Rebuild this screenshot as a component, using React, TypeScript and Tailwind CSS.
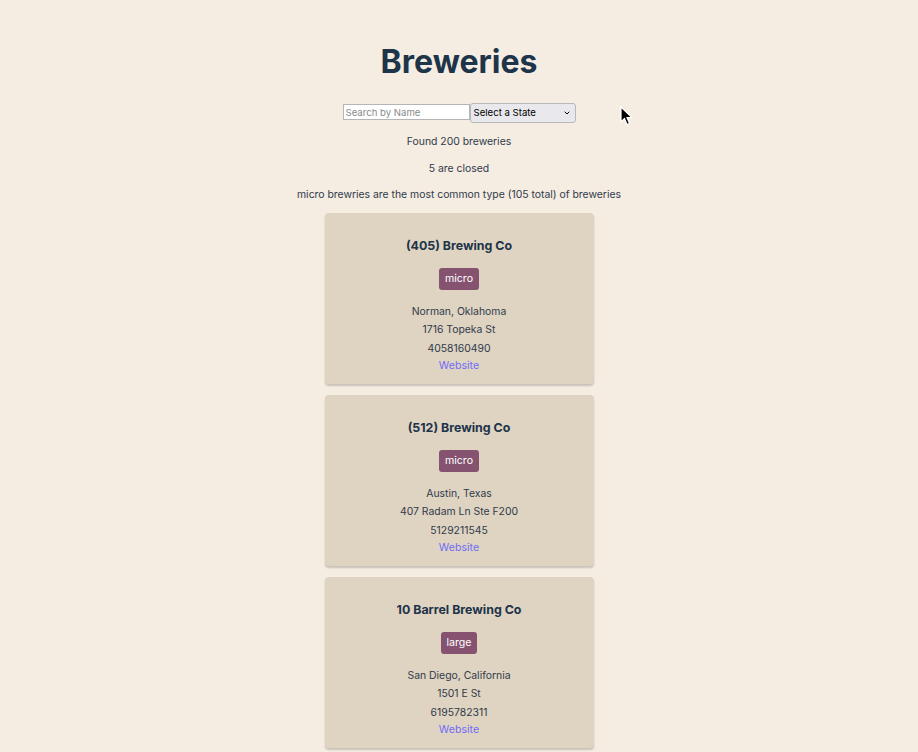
import { ChevronDown } from "lucide-react";

type Brewery = {
  name: string;
  type: string;
  city: string;
  state: string;
  street: string;
  phone: string;
};

const breweries: Brewery[] = [
  { name: "(405) Brewing Co", type: "micro", city: "Norman", state: "Oklahoma", street: "1716 Topeka St", phone: "4058160490" },
  { name: "(512) Brewing Co", type: "micro", city: "Austin", state: "Texas", street: "407 Radam Ln Ste F200", phone: "5129211545" },
  { name: "10 Barrel Brewing Co", type: "large", city: "San Diego", state: "California", street: "1501 E St", phone: "6195782311" },
];

const BreweryCard = ({ b }: { b: Brewery }) => (
  <div className="flex h-[171px] w-[269px] flex-col items-center rounded-[4px] bg-[#dfd3c2] pt-[24px] text-center shadow-[0_2px_2px_rgba(0,0,0,0.18)]">
    <h3 className="text-[12.4px] font-bold leading-[18px] text-[#1d3449]">{b.name}</h3>
    <span className="mt-[13px] flex h-[22px] items-center rounded-[3px] bg-[#85536f] px-[5.5px] text-[10.6px] text-white">
      {b.type}
    </span>
    <div className="mt-[13px] text-[10.4px] leading-[18.5px] text-[#2f3b4a]">
      <p>
        {b.city}, {b.state}
      </p>
      <p>{b.street}</p>
      <p>{b.phone}</p>
    </div>
    <a href="#" className="text-[10.6px] leading-[16px] text-[#6e6cf7]">
      Website
    </a>
  </div>
);

export default function App() {
  return (
    <div className="relative min-h-screen bg-[#f5ece2] font-['Inter',sans-serif] text-[#2f3b4a]">
      <div className="flex flex-col items-center pt-[42px]">
        <h1 className="text-[32px] font-bold leading-[40px] text-[#1d3449]">Breweries</h1>

        <div className="mt-[21px] flex items-start">
          <input
            placeholder="Search by Name"
            className="mt-[1px] block h-[16px] w-[127px] border border-[#b5b5b5] bg-white px-[2px] py-0 text-[9.6px] leading-none text-black placeholder-[#8a8a8a] outline-none"
          />
          <div className="relative">
            <select className="block h-[20px] w-[106px] appearance-none rounded-[3px] border border-[#b9b9bc] bg-[#e9e9ed] py-0 pl-[3px] text-[9.6px] leading-none text-black outline-none">
              <option>Select a State</option>
            </select>
            <ChevronDown className="pointer-events-none absolute right-[5px] top-[6px] h-[8px] w-[8px] text-black" strokeWidth={3} />
          </div>
        </div>

        <div className="mt-[11px] flex flex-col items-center gap-[11.5px] text-[10.4px] leading-[15px]">
          <p>Found 200 breweries</p>
          <p>5 are closed</p>
          <p>micro brewries are the most common type (105 total) of breweries</p>
        </div>

        <div className="mt-[10.5px] flex flex-col items-center gap-[11px] pb-4">
          {breweries.map((b) => (
            <BreweryCard key={b.name} b={b} />
          ))}
        </div>
      </div>

      {/* mouse cursor */}
      <svg className="absolute left-[620px] top-[106px]" width="14" height="20" viewBox="0 0 14 20">
        <path d="M1 1 L1 16 L4.5 12.5 L7 18.5 L9.5 17.5 L7 11.5 L12 11.5 Z" fill="#000" stroke="#fff" strokeWidth="1.2" />
      </svg>
    </div>
  );
}
